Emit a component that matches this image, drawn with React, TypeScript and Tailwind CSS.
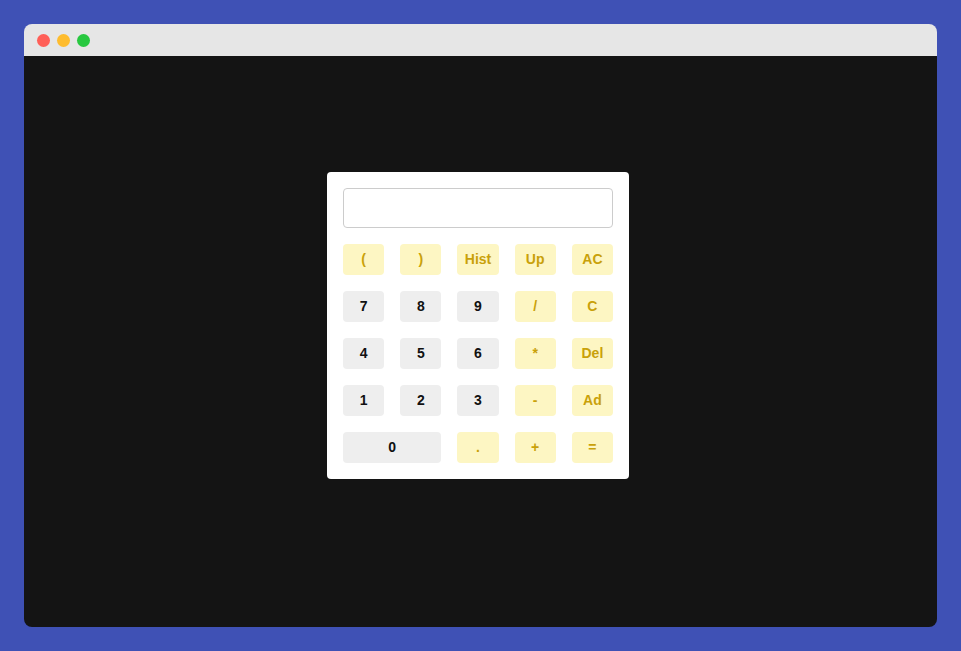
export default function App() {
  const rows: { label: string; kind: "op" | "num"; span?: boolean }[] = [
    { label: "(", kind: "op" },
    { label: ")", kind: "op" },
    { label: "Hist", kind: "op" },
    { label: "Up", kind: "op" },
    { label: "AC", kind: "op" },
    { label: "7", kind: "num" },
    { label: "8", kind: "num" },
    { label: "9", kind: "num" },
    { label: "/", kind: "op" },
    { label: "C", kind: "op" },
    { label: "4", kind: "num" },
    { label: "5", kind: "num" },
    { label: "6", kind: "num" },
    { label: "*", kind: "op" },
    { label: "Del", kind: "op" },
    { label: "1", kind: "num" },
    { label: "2", kind: "num" },
    { label: "3", kind: "num" },
    { label: "-", kind: "op" },
    { label: "Ad", kind: "op" },
    { label: "0", kind: "num", span: true },
    { label: ".", kind: "op" },
    { label: "+", kind: "op" },
    { label: "=", kind: "op" },
  ];

  return (
    <main className="h-[651px] w-[961px] bg-[#3f51b5] p-6 font-['Liberation_Sans',Arial,sans-serif]">
      <div className="flex h-full flex-col overflow-hidden rounded-lg">
        <div className="flex h-8 items-center gap-[7px] bg-[#e6e6e6] px-[13px] pt-[1px]">
          <span className="h-[13px] w-[13px] rounded-full bg-[#ff5f57]" />
          <span className="h-[13px] w-[13px] rounded-full bg-[#febc2e]" />
          <span className="h-[13px] w-[13px] rounded-full bg-[#28c840]" />
        </div>
        <div className="flex flex-1 items-center justify-center bg-[#141414] pb-8 pr-[5px]">
          <div className="w-[302px] rounded-sm bg-white p-4">
            <input
              type="text"
              className="mb-4 h-10 w-full rounded border border-[#cccccc] bg-white px-2 outline-none"
            />
            <div className="grid grid-cols-5 gap-4">
              {rows.map((b) => (
                <button
                  key={b.label}
                  className={
                    "h-[31px] rounded text-[14px] font-bold " +
                    (b.span ? "col-span-2 " : "") +
                    (b.kind === "op"
                      ? "bg-[#fdf6c3] text-[#c9a10a]"
                      : "bg-[#eeeeee] text-[#111111]")
                  }
                >
                  {b.label}
                </button>
              ))}
            </div>
          </div>
        </div>
      </div>
    </main>
  );
}
